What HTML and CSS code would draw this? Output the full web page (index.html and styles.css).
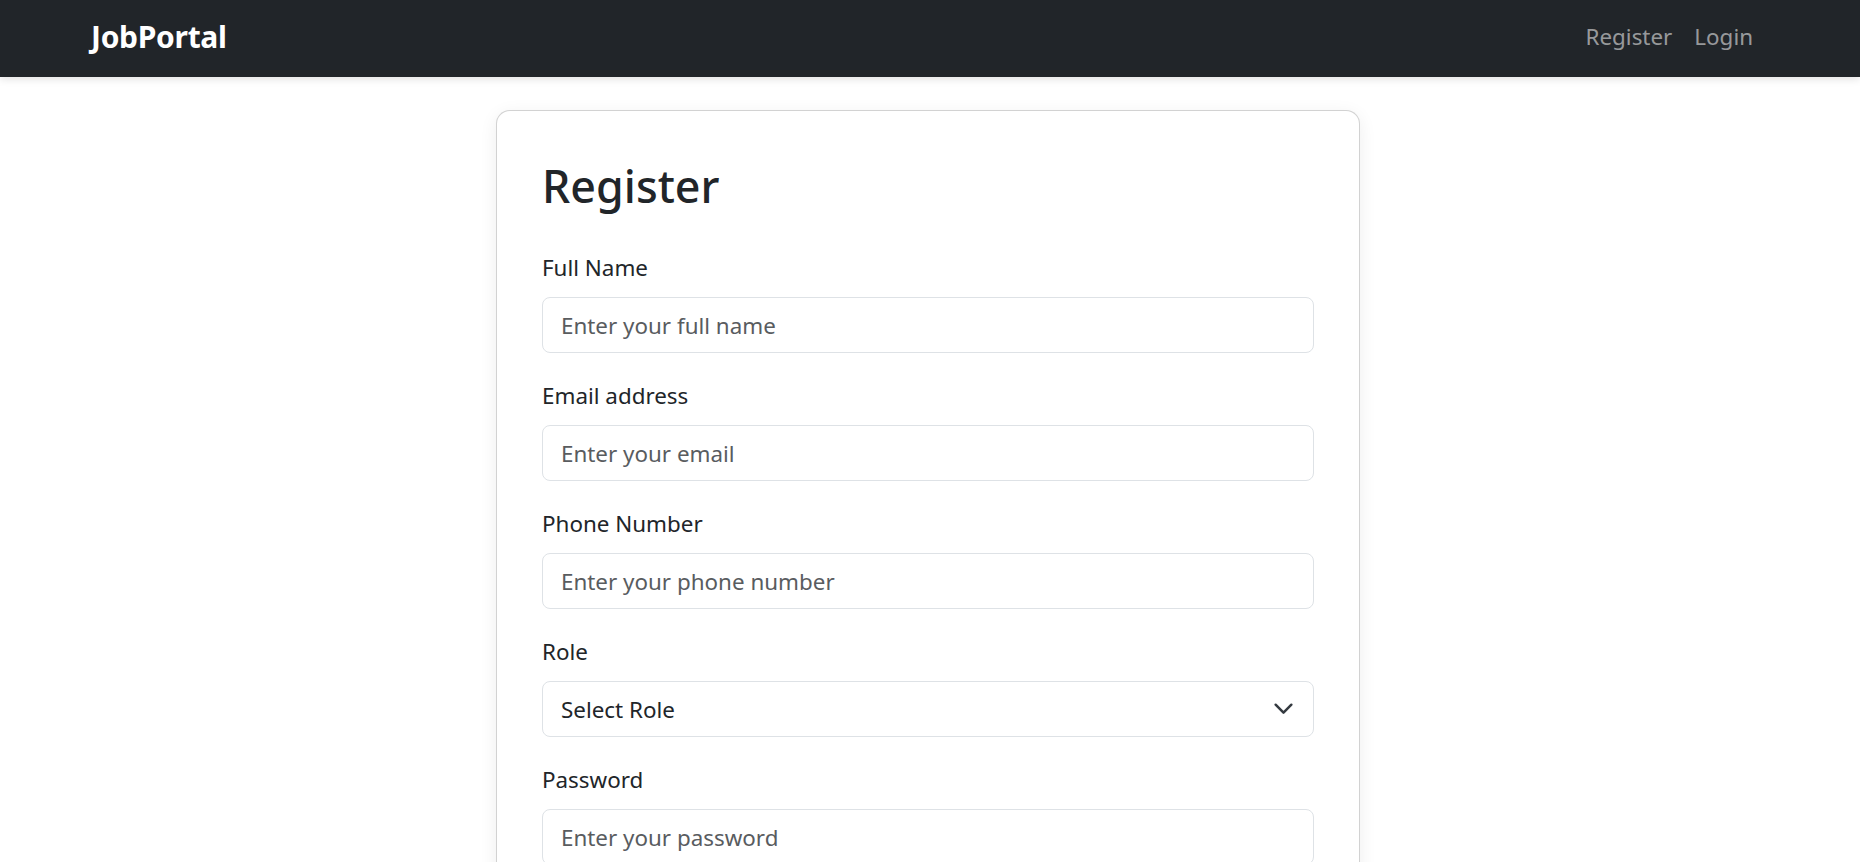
FILE: index.html
```html
<!DOCTYPE html>
<html lang="en">
<head>
<meta charset="utf-8">
<title>JobPortal - Register</title>
<link rel="stylesheet" href="styles.css">
</head>
<body>
<nav class="navbar">
  <a class="brand" href="#">JobPortal</a>
  <div class="nav-links">
    <a class="nav-link" href="#">Register</a>
    <a class="nav-link" href="#">Login</a>
  </div>
</nav>
<main class="page">
  <div class="card">
    <h2 class="title">Register</h2>
    <form class="form">
      <div class="field">
        <label class="label" for="name">Full Name</label>
        <input class="control" id="name" type="text" placeholder="Enter your full name">
      </div>
      <div class="field">
        <label class="label" for="email">Email address</label>
        <input class="control" id="email" type="email" placeholder="Enter your email">
      </div>
      <div class="field">
        <label class="label" for="phone">Phone Number</label>
        <input class="control" id="phone" type="text" placeholder="Enter your phone number">
      </div>
      <div class="field">
        <label class="label" for="role">Role</label>
        <div class="select-wrap">
          <select class="control select" id="role">
            <option>Select Role</option>
            <option>Job Seeker</option>
            <option>Employer</option>
          </select>
          <svg class="chevron" width="21" height="16" viewBox="0 0 16 12" aria-hidden="true">
            <path d="M2 3.5l6 6 6-6" fill="none" stroke="#343a40" stroke-width="1.9" stroke-linecap="round" stroke-linejoin="round"/>
          </svg>
        </div>
      </div>
      <div class="field">
        <label class="label" for="password">Password</label>
        <input class="control" id="password" type="password" placeholder="Enter your password">
      </div>
      <button class="submit" type="button">Register</button>
    </form>
  </div>
</main>
</body>
</html>
```
FILE: styles.css
```css
* { box-sizing: border-box; }
html, body { margin: 0; padding: 0; }
body {
  font-family: "Noto Sans", "Open Sans", sans-serif;
  font-size: 22.4px;
  line-height: 35px;
  color: #212529;
  background: #ffffff;
}
.navbar {
  height: 77px;
  background: #212529;
  display: flex;
  align-items: center;
  justify-content: space-between;
  padding: 0 96px 4px 91px;
  box-shadow: 0 2px 8px rgba(0, 0, 0, 0.12);
  position: relative;
}
.brand {
  color: #ffffff;
  font-weight: 700;
  font-size: 30px;
  text-decoration: none;
  letter-spacing: -0.3px;
}
.nav-links { display: flex; }
.nav-link {
  color: rgba(255, 255, 255, 0.55);
  text-decoration: none;
  padding: 0 11px;
}
.page {
  display: flex;
  justify-content: center;
  padding: 33px 4px 0 0;
}
.card {
  width: 864px;
  border: 1px solid rgba(0, 0, 0, 0.175);
  border-radius: 14px;
  box-shadow: 0 4px 18px rgba(0, 0, 0, 0.07);
  padding: 47px 45px 45px;
  background: #fff;
}
.title {
  margin: 0 0 36px 0;
  font-size: 44.8px;
  line-height: 56px;
  font-weight: 500;
}
.field { margin-bottom: 25px; }
.label {
  display: block;
  line-height: 36px;
  margin-bottom: 11px;
}
.control {
  display: block;
  width: 100%;
  height: 56px;
  border: 1px solid #dee2e6;
  border-radius: 8px;
  padding: 0 18px;
  font-family: inherit;
  font-size: 22.4px;
  color: #212529;
  background: #fff;
  outline: none;
}
.control::placeholder { color: #595c5f; opacity: 1; }
.select-wrap { position: relative; }
.select {
  appearance: none;
  -webkit-appearance: none;
}
.chevron {
  position: absolute;
  right: 20px;
  top: 19px;
  pointer-events: none;
}
.submit {
  width: 100%;
  height: 56px;
  border: 0;
  border-radius: 8px;
  background: #0d6efd;
  color: #fff;
  font-family: inherit;
  font-size: 22.4px;
}
```
